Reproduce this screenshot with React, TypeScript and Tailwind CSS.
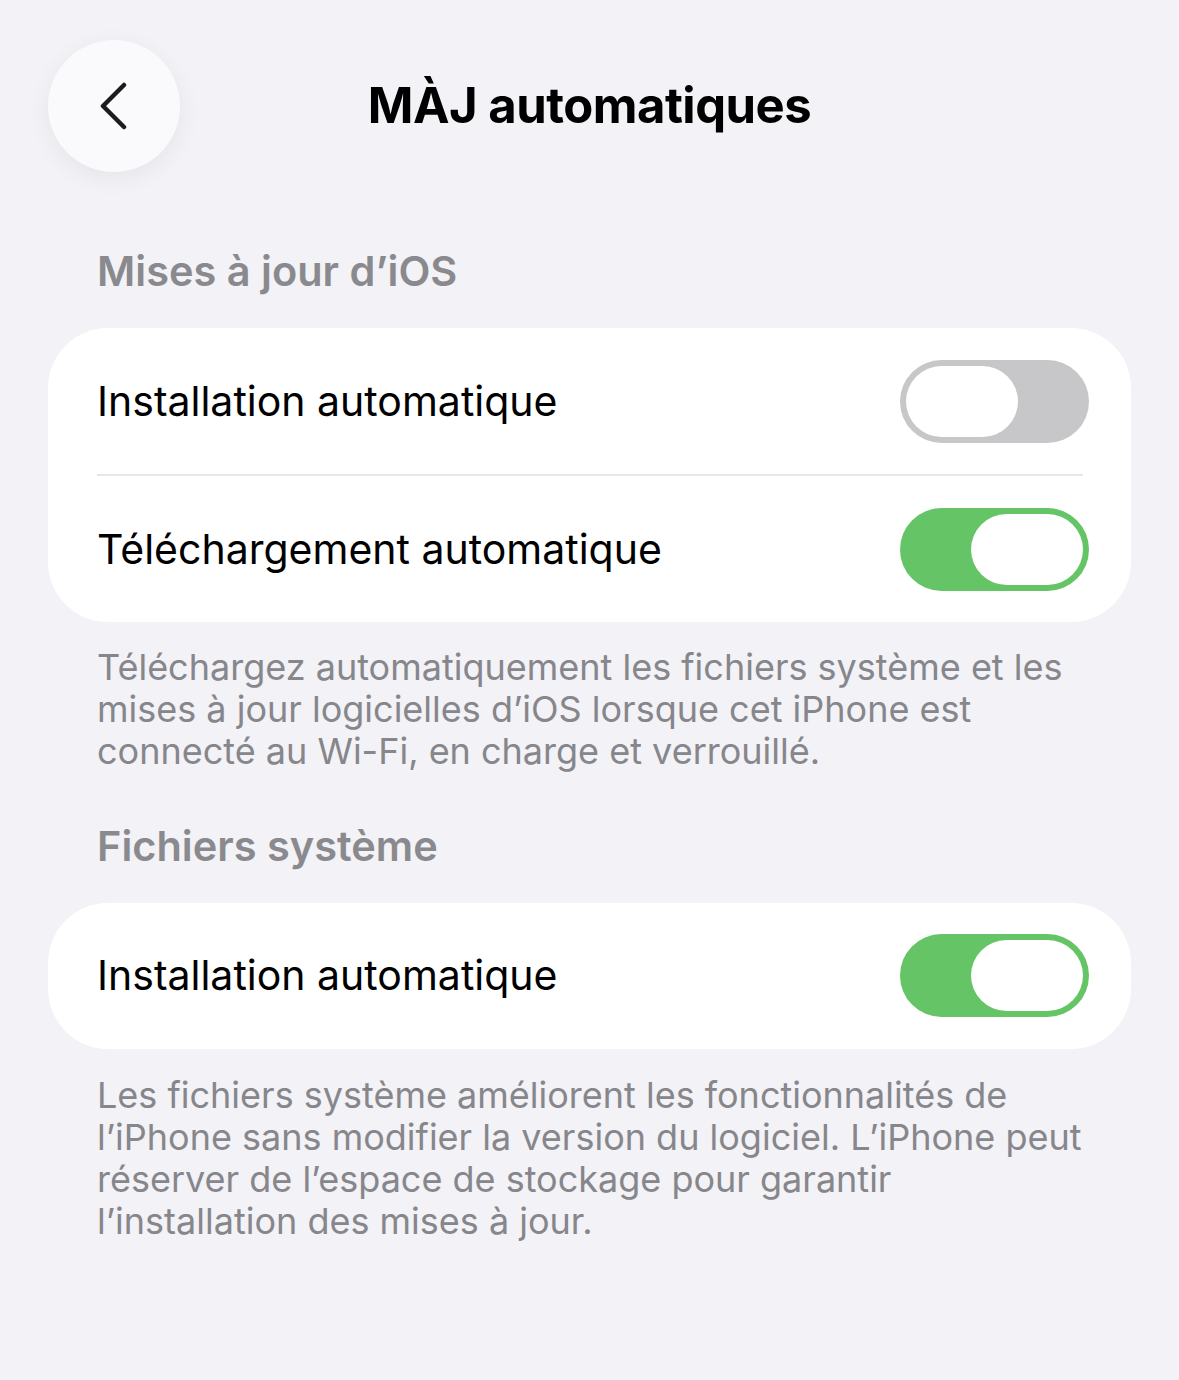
import React, { useState } from 'react';

const Toggle: React.FC<{ on: boolean; onChange: () => void }> = ({ on, onChange }) => (
  <button
    type="button"
    onClick={onChange}
    className={`flex h-[83px] w-[189px] shrink-0 items-center rounded-full px-[6px] ${
      on ? 'justify-end bg-[#65c466]' : 'justify-start bg-[#c7c7c9]'
    }`}
  >
    <span className="block h-[71px] w-[112px] rounded-full bg-white" />
  </button>
);

const Row: React.FC<{ label: string; on: boolean; onChange: () => void }> = ({ label, on, onChange }) => (
  <div className="flex h-[146px] items-center justify-between pl-[49px] pr-[42px]">
    <span className="text-[41px] text-black">{label}</span>
    <Toggle on={on} onChange={onChange} />
  </div>
);

const App: React.FC = () => {
  const [autoInstall, setAutoInstall] = useState(false);
  const [autoDownload, setAutoDownload] = useState(true);
  const [systemFiles, setSystemFiles] = useState(true);

  return (
    <main
      className="min-h-[1380px] w-full bg-[#f2f2f7] px-[48px] pt-[40px]"
      style={{ fontFamily: 'Inter, "Noto Sans", sans-serif' }}
    >
      <header className="grid grid-cols-[132px_1fr_132px] items-center">
        <button
          type="button"
          className="flex h-[132px] w-[132px] items-center justify-center rounded-full bg-[#fafafc] shadow-[0_6px_24px_rgba(0,0,0,0.06)]"
        >
          <svg width="30" height="48" viewBox="0 0 30 48" fill="none">
            <path d="M25 3 L4 24 L25 45" stroke="#1c1c1e" strokeWidth="4.5" strokeLinecap="round" strokeLinejoin="round" />
          </svg>
        </button>
        <h1 className="text-center text-[49px] font-bold tracking-[-0.5px] text-black">MÀJ automatiques</h1>
        <div />
      </header>

      <h2 className="mt-[68px] pl-[49px] text-[41.5px] font-semibold text-[#8a8a8e]">Mises à jour d’iOS</h2>
      <section className="mt-[26px] rounded-[60px] bg-white">
        <Row label="Installation automatique" on={autoInstall} onChange={() => setAutoInstall(!autoInstall)} />
        <div className="ml-[49px] mr-[48px] h-[2px] bg-[#e6e6eb]" />
        <Row label="Téléchargement automatique" on={autoDownload} onChange={() => setAutoDownload(!autoDownload)} />
      </section>
      <p className="mt-[24px] pl-[49px] pr-[40px] text-[36px] leading-[42px] text-[#86868b]">
        Téléchargez automatiquement les fichiers système et les mises à jour logicielles d’iOS lorsque cet iPhone est
        connecté au Wi-Fi, en charge et verrouillé.
      </p>

      <h2 className="mt-[43px] pl-[49px] text-[41.5px] font-semibold text-[#8a8a8e]">Fichiers système</h2>
      <section className="mt-[25px] rounded-[60px] bg-white">
        <Row label="Installation automatique" on={systemFiles} onChange={() => setSystemFiles(!systemFiles)} />
      </section>
      <p className="mt-[25px] pl-[49px] pr-[40px] text-[36px] leading-[42px] text-[#86868b]">
        Les fichiers système améliorent les fonctionnalités de l’iPhone sans modifier la version du logiciel. L’iPhone
        peut réserver de l’espace de stockage pour garantir l’installation des mises à jour.
      </p>
    </main>
  );
};

export default App;
